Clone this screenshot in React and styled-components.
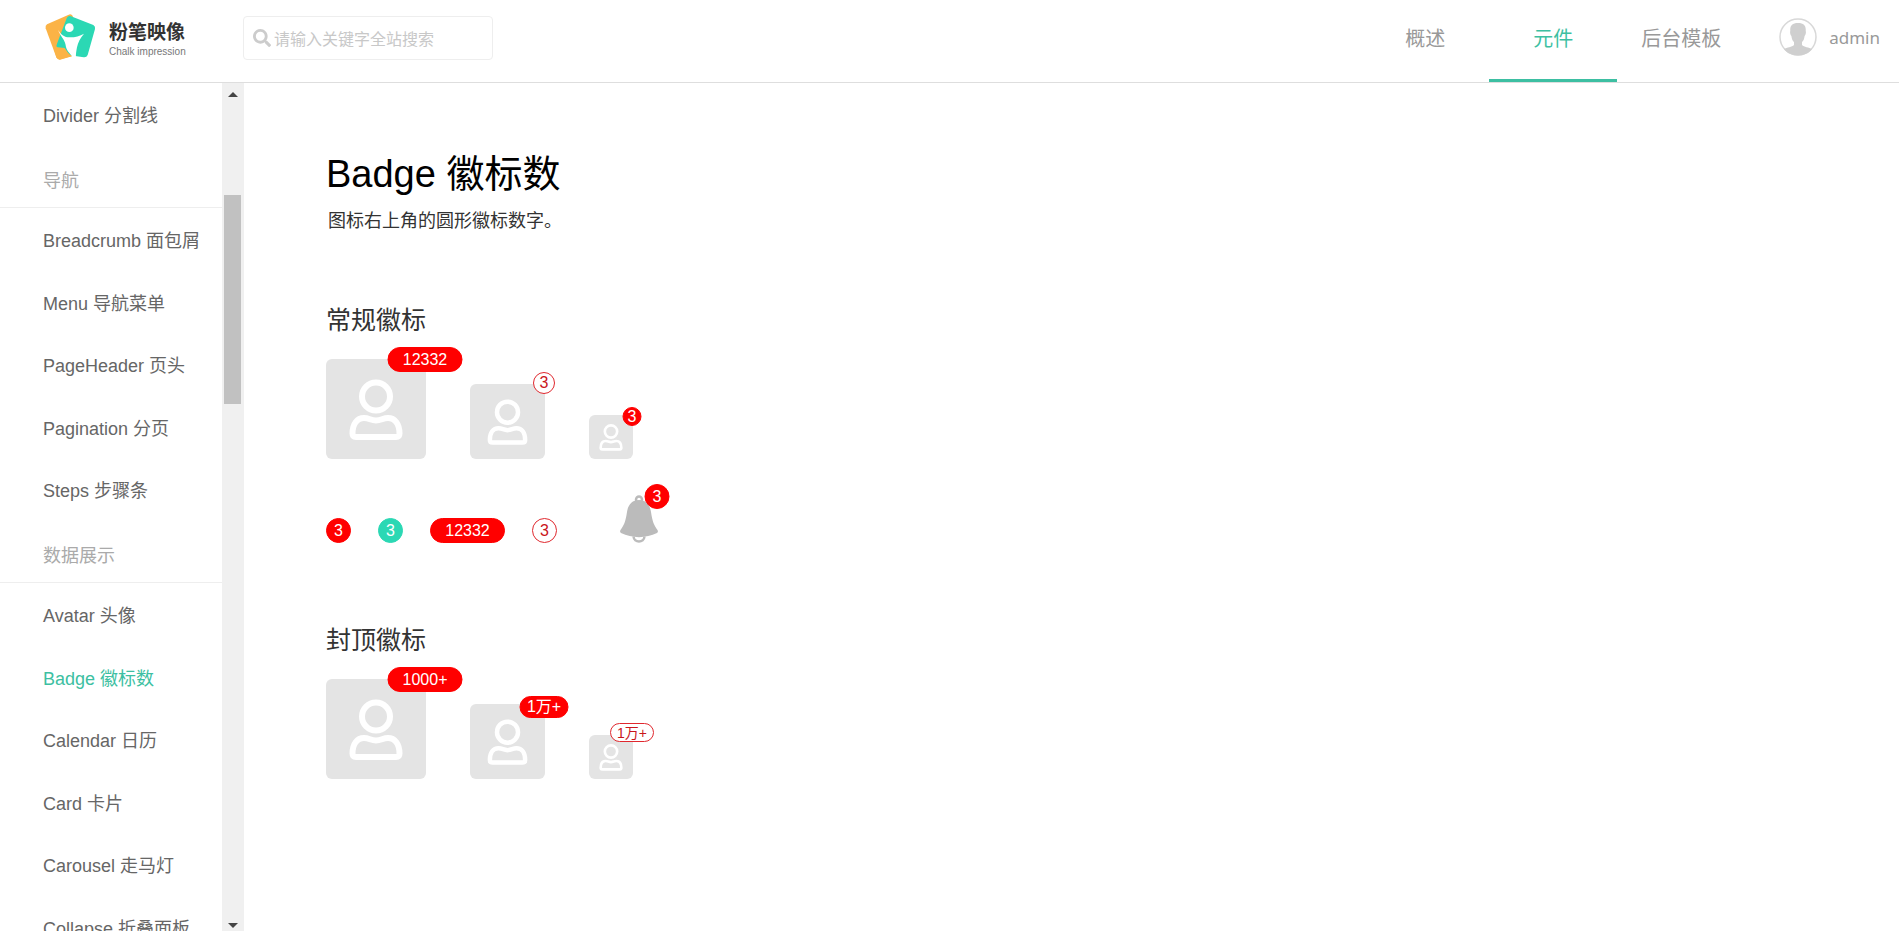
import React from 'react'
import styled, { createGlobalStyle } from 'styled-components'
import { FaSearch } from 'react-icons/fa'

const navItems = [
  { title: '概述' },
  { title: '元件', active: true },
  { title: '后台模板' },
]

const menu = [
  {
    items: ['Divider 分割线'],
  },
  {
    title: '导航',
    items: ['Breadcrumb 面包屑', 'Menu 导航菜单', 'PageHeader 页头', 'Pagination 分页', 'Steps 步骤条'],
  },
  {
    title: '数据展示',
    items: ['Avatar 头像', 'Badge 徽标数', 'Calendar 日历', 'Card 卡片', 'Carousel 走马灯', 'Collapse 折叠面板'],
  },
]

const current = 'Badge 徽标数'

const normalAvatars = [
  { size: 100, badge: { text: '12332', width: 75, height: 25, top: -12 } },
  { size: 75, badge: { text: '3', width: 22, height: 22, top: -12, type: 'outline' } },
  { size: 44, badge: { text: '3', width: 19, height: 19, top: -8 } },
]

const plainBadges = [
  { text: '3', width: 25, height: 25 },
  { text: '3', width: 25, height: 25, type: 'success' },
  { text: '12332', width: 75, height: 25 },
  { text: '3', width: 25, height: 25, type: 'outline' },
]

const cappedAvatars = [
  { size: 100, badge: { text: '1000+', width: 75, height: 25, top: -12 } },
  { size: 75, badge: { text: '1万+', width: 49, height: 22, top: -8 } },
  { size: 44, badge: { text: '1万+', width: 44, height: 19, top: -12, type: 'outline', small: true } },
]

export default function App() {
  return (
    <>
      <GlobalStyle />
      <Header>
        <Logo href="#">
          <LogoMark />
          <LogoText>
            粉笔映像
            <small>Chalk impression</small>
          </LogoText>
        </Logo>
        <Search>
          <FaSearch size={18} />
          <SearchInput type="text" placeholder="请输入关键字全站搜索" aria-label="搜索" />
        </Search>
        <Nav>
          {navItems.map(({ title, active }) => (
            <NavLink key={title} href="#" $active={active}>{title}</NavLink>
          ))}
        </Nav>
        <User href="#">
          <UserPicture />
          admin
        </User>
      </Header>
      <Body>
        <Sidebar>
          {menu.map(({ title, items }) => (
            <section key={items[0]}>
              {title && <MenuTitle>{title}</MenuTitle>}
              <MenuList>
                {items.map(item => (
                  <li key={item}>
                    <MenuLink href="#" $active={item === current}>{item}</MenuLink>
                  </li>
                ))}
              </MenuList>
            </section>
          ))}
        </Sidebar>
        <Scrollbar>
          <Arrow />
          <Thumb />
          <Arrow $down />
        </Scrollbar>
        <Content>
          <Title>Badge 徽标数</Title>
          <Description>图标右上角的圆形徽标数字。</Description>

          <Section>
            <h2>常规徽标</h2>
            <AvatarRow>
              {normalAvatars.map(avatar => <Avatar key={avatar.size} {...avatar} />)}
            </AvatarRow>
            <BadgeRow>
              {plainBadges.map(({ text, width, height, type }, i) => (
                <Badge key={i} $width={width} $height={height} $type={type}>{text}</Badge>
              ))}
              <Bell>
                <BellIcon />
                <CornerBadge $width={25} $height={25} $top={-11}>3</CornerBadge>
              </Bell>
            </BadgeRow>
          </Section>

          <Section>
            <h2>封顶徽标</h2>
            <AvatarRow>
              {cappedAvatars.map(avatar => <Avatar key={avatar.size} {...avatar} />)}
            </AvatarRow>
          </Section>
        </Content>
      </Body>
    </>
  )
}

function Avatar({ size, badge }) {
  return (
    <AvatarBox $size={size}>
      <svg viewBox="0 0 100 100" fill="none" stroke="#fff" strokeWidth="6" strokeLinejoin="round">
        <circle cx="50" cy="37.5" r="14" />
        <path d="M30 78H70Q73.5 78 73.5 74.5C73.5 65 69 59 62 59C57 59 55 61.5 50 61.5C45 61.5 43 59 38 59C31 59 26.5 65 26.5 74.5Q26.5 78 30 78Z" />
      </svg>
      <CornerBadge
        $width={badge.width}
        $height={badge.height}
        $top={badge.top}
        $type={badge.type}
        $small={badge.small}
      >
        {badge.text}
      </CornerBadge>
    </AvatarBox>
  )
}

function LogoMark() {
  return (
    <svg width="60" height="50" viewBox="0 0 180 150">
      <path d="M21 43L86 14Q94 11 98 18L118 90L96 138L62 148Q53 150 49 142L17 55Q15 47 21 43Z" fill="#fbb346" />
      <path d="M93 19L160 45Q167 49 165 57L143 135Q140 143 131 142L90 136L52 113Q47 108 51 101L80 25Q84 16 93 19Z" fill="#2bd8b4" />
      <path d="M74 114L84 128Q92 136 96 139L60 149Q53 150 49 142L40 110Z" fill="#fbb346" />
      <path d="M55 60C63 76 76 83 90 82C106 82 120 78 132 71C121 84 114 97 111 112C109 124 107 132 108 145H97C97 135 88 132 82 121C76 110 78 104 74 96C70 84 58 74 55 60Z" fill="#fff" />
      <circle cx="88" cy="53" r="13" fill="#fff" />
    </svg>
  )
}

function UserPicture() {
  return (
    <svg width="38" height="38" viewBox="0 0 38 38">
      <circle cx="19" cy="19" r="18" fill="#fff" stroke="#d8d8d8" strokeWidth="1.5" />
      <path d="M19 5C13 5 10.800 8 11.300 13C10.800 14 11.200 17 12.400 18C12.800 21 13.500 23 15 24V27C13 29 8 29.500 5 31C11 39.500 27 39.500 33 31C30 29.500 25 29 23 27V24C24.500 23 25.200 21 25.600 18C26.800 17 27.200 14 26.700 13C27.200 8 25 5 19 5Z" fill="#cfcfcf" />
    </svg>
  )
}

function BellIcon() {
  return (
    <svg width="38" height="48" viewBox="1 0 38 48" fill="#bbb">
      <circle cx="20" cy="4.500" r="3" fill="none" stroke="#bbb" strokeWidth="2.500" />
      <path d="M20 5C27 5 31 10 32 17C33.500 27 35 30 38.500 35C39.200 36.500 39 37.500 38 38C27 43.500 13 43.500 2 38C1 37.500 0.800 36.500 1.500 35C5 30 6.500 27 8 17C9 10 13 5 20 5Z" />
      <path d="M14.500 41.500C15 48 25 48 25.500 41.500" fill="none" stroke="#bbb" strokeWidth="2.500" />
    </svg>
  )
}

const GlobalStyle = createGlobalStyle`
  * {
    box-sizing: border-box;
  }
  body {
    margin: 0;
    overflow: hidden;
    background: #fff;
    font-family: "Liberation Sans", "Noto Sans CJK SC", sans-serif;
  }
  a {
    color: inherit;
    text-decoration: none;
  }
  h1, h2, h3, p, ul {
    margin: 0;
    padding: 0;
    font-weight: 400;
  }
`
const Header = styled.header`
  display: flex;
  align-items: center;
  height: 83px;
  padding: 0 19px 0 40px;
  border-bottom: 1px solid #dedede;
`
const Logo = styled.a`
  display: flex;
  align-items: center;
  width: 203px;
  padding-bottom: 12px;
`
const LogoText = styled.span`
  margin-left: 9px;
  padding-top: 10px;
  font-size: 19px;
  font-weight: 700;
  line-height: 24px;
  color: #333;
  small {
    display: block;
    font-size: 10px;
    font-weight: 400;
    line-height: 14px;
    color: #777;
  }
`
const Search = styled.label`
  display: flex;
  align-items: center;
  width: 250px;
  height: 44px;
  margin-bottom: 6px;
  padding: 0 9px;
  border: 1px solid #eee;
  border-radius: 4px;
  color: #ccc;
`
const SearchInput = styled.input`
  flex: 1;
  min-width: 0;
  margin-left: 3px;
  padding: 3px 0 0;
  border: 0;
  outline: 0;
  font: inherit;
  font-size: 16px;
  color: #666;
  &::placeholder {
    color: #c8c8c8;
  }
`
const Nav = styled.nav`
  display: flex;
  align-self: stretch;
  margin-left: auto;
`
const NavLink = styled.a`
  width: 128px;
  border-bottom: 3px solid ${({ $active }) => ($active ? '#3dbfa2' : 'transparent')};
  font-size: 20px;
  line-height: 78px;
  text-align: center;
  color: ${({ $active }) => ($active ? '#3dbfa2' : '#999')};
`
const User = styled.a`
  display: flex;
  align-items: center;
  gap: 12px;
  margin: 0 0 8px 34px;
  font-family: "Noto Sans", sans-serif;
  font-size: 17px;
  color: #999;
`
const Body = styled.div`
  display: flex;
  height: calc(100vh - 83px);
`
const Sidebar = styled.aside`
  flex: none;
  width: 222px;
  overflow: hidden;
`
const MenuTitle = styled.h3`
  height: 62px;
  padding: 4px 0 0 43px;
  border-bottom: 1px solid #eee;
  font-size: 18px;
  line-height: 62px;
  color: #aaa;
`
const MenuList = styled.ul`
  list-style: none;
  li {
    height: 62px;
  }
  li:nth-child(odd) {
    height: 63px;
  }
`
const MenuLink = styled.a`
  display: block;
  padding-left: 43px;
  font-size: 18px;
  line-height: 66px;
  white-space: nowrap;
  color: ${({ $active }) => ($active ? '#3dbfa2' : '#666')};
`
const Scrollbar = styled.div`
  display: flex;
  flex: none;
  flex-direction: column;
  width: 22px;
  padding: 9px 3px 3px 2px;
  background: #f0f0f0;
`
const Arrow = styled.span`
  align-self: center;
  margin-top: ${({ $down }) => ($down ? 'auto' : 0)};
  border: 5px solid transparent;
  border-top: ${({ $down }) => ($down ? '5px solid #444' : 0)};
  border-bottom: ${({ $down }) => ($down ? 0 : '5px solid #444')};
`
const Thumb = styled.span`
  height: 209px;
  margin-top: 98px;
  background: #c1c1c1;
`
const Content = styled.main`
  flex: 1;
  padding: 66px 82px;
`
const Title = styled.h1`
  font-size: 38px;
  line-height: 50px;
  color: #000;
`
const Description = styled.p`
  margin-top: 7px;
  padding-left: 2px;
  font-size: 18px;
  line-height: 30px;
  color: #333;
`
const Section = styled.section`
  margin-top: 69px;
  & + & {
    margin-top: 82px;
  }
  h2 {
    font-size: 25px;
    line-height: 30px;
    color: #333;
  }
`
const AvatarRow = styled.div`
  display: flex;
  align-items: flex-end;
  gap: 44px;
  margin-top: 24px;
`
const AvatarBox = styled.div`
  position: relative;
  width: ${({ $size }) => $size}px;
  height: ${({ $size }) => $size}px;
  border-radius: 6px;
  background: #e4e4e4;
  svg {
    display: block;
  }
`
const badgeColors = {
  primary: 'border-color: #f00; background: #f00; color: #fff;',
  success: 'border-color: #2bd8b4; background: #2bd8b4; color: #fff;',
  outline: 'border-color: #e0282e; background: #fff; color: #c9151b;',
}
const Badge = styled.span`
  display: flex;
  justify-content: center;
  align-items: center;
  width: ${({ $width }) => $width}px;
  height: ${({ $height }) => $height}px;
  border: 1px solid;
  border-radius: 13px;
  font-size: ${({ $small }) => ($small ? 14 : 16)}px;
  line-height: 1;
  white-space: nowrap;
  ${({ $type = 'primary' }) => badgeColors[$type]}
`
// centred on the right edge of its parent
const CornerBadge = styled(Badge)`
  position: absolute;
  top: ${({ $top }) => $top}px;
  left: calc(100% - 1px);
  transform: translateX(-50%);
`
const BadgeRow = styled.div`
  display: flex;
  align-items: flex-end;
  gap: 27px;
  margin-top: 36px;
`
const Bell = styled.span`
  position: relative;
  margin-left: 36px;
  svg {
    display: block;
  }
`
